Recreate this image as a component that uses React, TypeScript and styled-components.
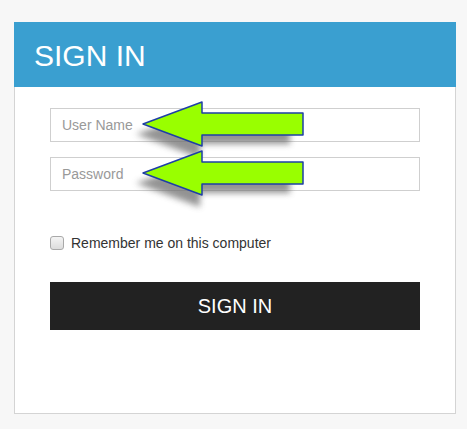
import React from "react";
import styled, { createGlobalStyle } from "styled-components";

const GlobalStyle = createGlobalStyle`
  html, body {
    margin: 0;
    padding: 0;
    background: #f7f7f7;
    font-family: "Liberation Sans", Arial, sans-serif;
  }
`;

const Page = styled.div`
  padding: 22px 0 0 14px;
`;

const Card = styled.div`
  width: 442px;
  height: 392px;
  box-sizing: border-box;
  background: #fff;
  border: 1px solid #d4d4d4;
  border-top: none;
`;

const Header = styled.div`
  height: 65px;
  margin: 0 -1px;
  background: #3a9fd0;
  color: #fff;
  font-size: 30px;
  line-height: 30px;
  padding: 19px 0 0 20px;
  box-sizing: border-box;
`;

const Form = styled.form`
  display: flex;
  flex-direction: column;
  padding: 21px 35px 0;
`;

const Field = styled.div`
  position: relative;
  margin-bottom: 15px;
`;

const Input = styled.input`
  display: block;
  width: 100%;
  height: 34px;
  box-sizing: border-box;
  border: 1px solid #cfcfcf;
  padding: 0 11px;
  font-family: inherit;
  font-size: 14px;
  color: #555;
  outline: none;
  &::placeholder {
    color: #999;
  }
`;

const ArrowSvg = styled.svg`
  position: absolute;
  left: 80px;
  top: -20px;
  pointer-events: none;
`;

const Remember = styled.label`
  display: flex;
  align-items: center;
  gap: 7px;
  margin-top: 29px;
  font-size: 14px;
  color: #333;
`;

const Box = styled.span`
  width: 12px;
  height: 12px;
  border: 1px solid #a9a9a9;
  border-radius: 3px;
  background: linear-gradient(#f4f4f4, #dcdcdc);
`;

const Button = styled.button`
  margin-top: 31px;
  height: 48px;
  border: none;
  background: #222;
  color: #fff;
  font-family: inherit;
  font-size: 20px;
`;

const Arrow: React.FC<{ id: string }> = ({ id }) => (
  <ArrowSvg width="200" height="80" viewBox="0 0 200 80">
    <defs>
      <filter id={id} x="-20%" y="-20%" width="140%" height="140%">
        <feGaussianBlur stdDeviation="3" />
      </filter>
    </defs>
    <path
      d="M6 46 L70 25 L70 35 L160 35 L160 56 L70 56 L70 70 Z"
      fill="#6f6f6f"
      opacity="0.75"
      filter={`url(#${id})`}
    />
    <path
      d="M13 36 L72 14 L72 25 L173 25 L173 47 L72 47 L72 58 Z"
      fill="#99ff00"
      stroke="#1e3fa6"
      strokeWidth="1.5"
      strokeLinejoin="round"
    />
  </ArrowSvg>
);

export default function App() {
  return (
    <Page>
      <GlobalStyle />
      <Card>
        <Header>SIGN IN</Header>
        <Form onSubmit={(e) => e.preventDefault()}>
          <Field>
            <Input placeholder="User Name" />
            <Arrow id="sh1" />
          </Field>
          <Field>
            <Input type="password" placeholder="Password" />
            <Arrow id="sh2" />
          </Field>
          <Remember>
            <Box />
            Remember me on this computer
          </Remember>
          <Button type="submit">SIGN IN</Button>
        </Form>
      </Card>
    </Page>
  );
}
